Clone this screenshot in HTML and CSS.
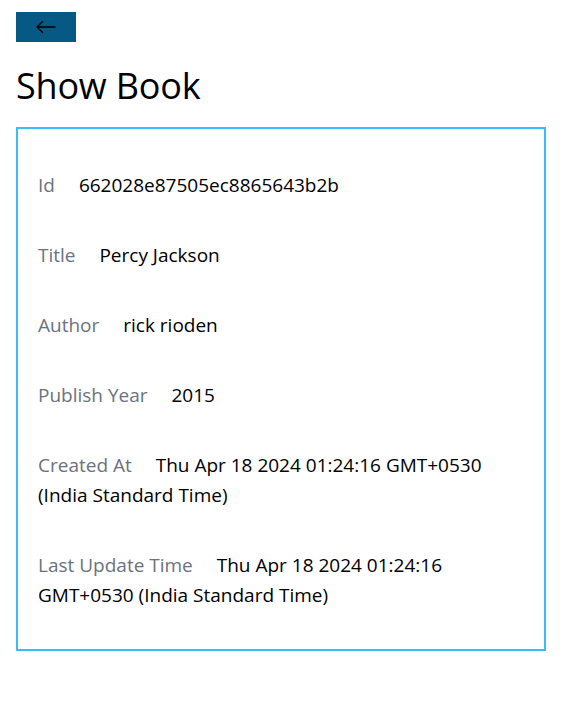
FILE: index.html
```html
<!DOCTYPE html>
<html lang="en">
<head>
<meta charset="utf-8">
<title>Show Book</title>
<link rel="stylesheet" href="styles.css">
</head>
<body>
<div class="page">
  <div class="top">
    <a class="back" href="#" aria-label="Back">
      <svg viewBox="0 0 16 16" width="22" height="22" fill="currentColor" aria-hidden="true"><path fill-rule="evenodd" d="M15 8a.5.5 0 0 0-.5-.5H2.707l3.147-3.146a.5.5 0 1 0-.708-.708l-4 4a.5.5 0 0 0 0 .708l4 4a.5.5 0 0 0 .708-.708L2.707 8.5H14.5A.5.5 0 0 0 15 8z"/></svg>
    </a>
  </div>
  <h1 class="title">Show Book</h1>
  <div class="card">
    <div class="row"><span class="label">Id</span> <span>662028e87505ec8865643b2b</span></div>
    <div class="row"><span class="label">Title</span> <span>Percy Jackson</span></div>
    <div class="row"><span class="label">Author</span> <span>rick rioden</span></div>
    <div class="row"><span class="label">Publish Year</span> <span>2015</span></div>
    <div class="row"><span class="label">Created At</span> <span>Thu Apr 18 2024 01:24:16 GMT+0530 (India Standard Time)</span></div>
    <div class="row"><span class="label">Last Update Time</span> <span>Thu Apr 18 2024 01:24:16 GMT+0530 (India Standard Time)</span></div>
  </div>
</div>
</body>
</html>
```
FILE: styles.css
```css
html, body {
  margin: 0;
  padding: 0;
  background: #ffffff;
}
body {
  font-family: "Segoe UI", "Open Sans", "Noto Sans", sans-serif;
  color: #000000;
}
.page {
  padding: 12px 18px 0 16px;
}
.top {
  display: flex;
}
.back {
  display: flex;
  align-items: center;
  justify-content: center;
  width: 60px;
  height: 30px;
  background: #075985;
  color: #000000;
  text-decoration: none;
}
.title {
  font-size: 36px;
  font-weight: 400;
  line-height: 44px;
  margin: 22px 0 19px 0;
  letter-spacing: -0.2px;
}
.card {
  border: 2px solid #38bdf8;
  padding: 41px 20px 39px 20px;
  display: flex;
  flex-direction: column;
  gap: 40px;
}
.row {
  font-size: 19px;
  line-height: 30px;
}
.label {
  color: #6b7280;
  margin-right: 19px;
}
```
